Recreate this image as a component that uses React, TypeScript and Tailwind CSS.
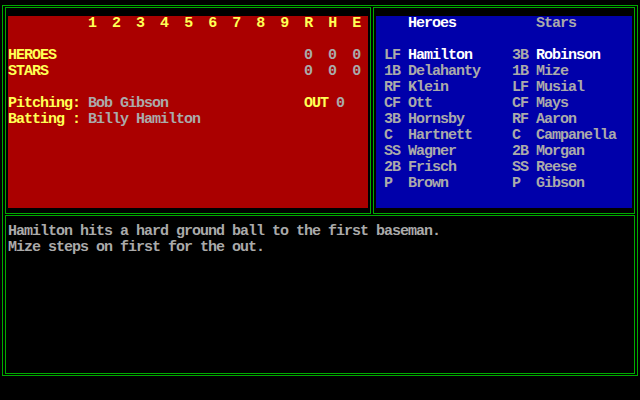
const YELLOW = "text-[#ffff55]";
const GREY = "text-[#aaaaaa]";
const WHITE = "text-white";

// one text row of the 80x25 screen: [column, text, colour]
type Seg = [number, string, string];

function Line({ segs = [] }: { segs?: Seg[] }) {
    let col = 0;
    return (
        <div className="h-4 whitespace-pre">
            { segs.map(([at, text, cls], i) => {
                const gap = " ".repeat(Math.max(0, at - col));
                col = at + text.length;
                return (
                    <span key={ i }>
                        { gap }
                        <span className={ cls }>{ text }</span>
                    </span>
                );
            }) }
        </div>
    );
}

const lineups: [string, string, string, string][] = [
    ["LF", "Hamilton", "3B", "Robinson"],
    ["1B", "Delahanty", "1B", "Mize"],
    ["RF", "Klein", "LF", "Musial"],
    ["CF", "Ott", "CF", "Mays"],
    ["3B", "Hornsby", "RF", "Aaron"],
    ["C", "Hartnett", "C", "Campanella"],
    ["SS", "Wagner", "2B", "Morgan"],
    ["2B", "Frisch", "SS", "Reese"],
    ["P", "Brown", "P", "Gibson"],
];

const innings: Seg[] = ["1", "2", "3", "4", "5", "6", "7", "8", "9", "R", "H", "E"].map(
    (c, i) => [10 + i * 3, c, YELLOW] as Seg
);

export default function App() {
    return (
        <div className="w-[640px] h-[400px] bg-black pl-[2px] pt-[5px] font-['Liberation_Mono',monospace] font-bold text-[15px] leading-4 tracking-[-1px]">
            <div className="w-[636px] h-[371px] border border-[#00aa00] px-[2px] py-[1px] flex flex-col gap-[1px]">

                {/* Top half */ }
                <div className="flex gap-[2px] h-[207px]">

                    {/* Scoreboard */ }
                    <div className="w-[366px] h-full border border-[#00aa00] pl-[2px] pt-[8px]">
                        <div className="w-[360px] h-[192px] bg-[#aa0000]">
                            <Line segs={ innings } />
                            <Line />
                            <Line segs={ [[0, "HEROES", YELLOW], [37, "0", GREY], [40, "0", GREY], [43, "0", GREY]] } />
                            <Line segs={ [[0, "STARS", YELLOW], [37, "0", GREY], [40, "0", GREY], [43, "0", GREY]] } />
                            <Line />
                            <Line segs={ [[0, "Pitching: ", YELLOW], [10, "Bob Gibson", GREY], [37, "OUT", YELLOW], [41, "0", GREY]] } />
                            <Line segs={ [[0, "Batting : ", YELLOW], [10, "Billy Hamilton", GREY]] } />
                        </div>
                    </div>

                    {/* Lineups */ }
                    <div className="w-[262px] h-full border border-[#00aa00] pl-[2px] pt-[8px]">
                        <div className="w-[256px] h-[192px] bg-[#0000aa]">
                            <Line segs={ [[4, "Heroes", WHITE], [20, "Stars", GREY]] } />
                            <Line />
                            { lineups.map(([p1, n1, p2, n2], i) => (
                                <Line
                                    key={ n1 }
                                    segs={ [
                                        [1, p1, GREY],
                                        [4, n1, i === 0 ? WHITE : GREY],
                                        [17, p2, GREY],
                                        [20, n2, i === 0 ? WHITE : GREY],
                                    ] }
                                />
                            )) }
                        </div>
                    </div>
                </div>

                {/* Play by play */ }
                <div className="h-[159px] border border-[#00aa00] pl-[2px] pt-[8px]">
                    <Line segs={ [[0, "Hamilton hits a hard ground ball to the first baseman.", GREY]] } />
                    <Line segs={ [[0, "Mize steps on first for the out.", GREY]] } />
                </div>
            </div>
        </div>
    );
}
